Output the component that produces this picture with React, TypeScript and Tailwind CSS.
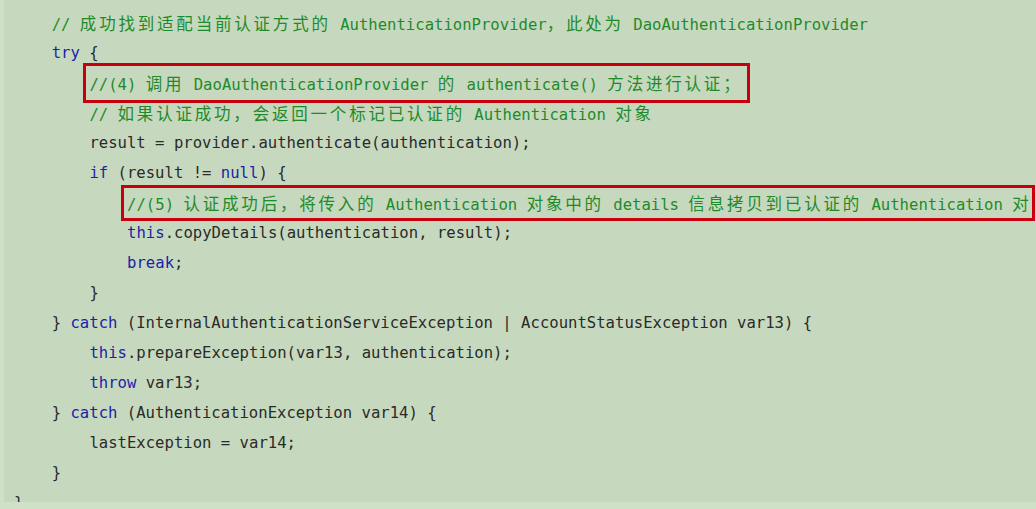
import React from "react";

type Seg = { t: string; c?: "kw" | "cm" };

const CJK = /[\u3000-\u303f\u4e00-\u9fff\uff00-\uffef]+/g;

function renderText(s: string, keyBase: string) {
  const out: React.ReactNode[] = [];
  let last = 0;
  let m: RegExpExecArray | null;
  let i = 0;
  CJK.lastIndex = 0;
  while ((m = CJK.exec(s))) {
    if (m.index > last) out.push(<span key={keyBase + "a" + i++}>{s.slice(last, m.index)}</span>);
    out.push(
      <span
        key={keyBase + "c" + i++}
        className="font-['Noto_Sans_CJK_SC',sans-serif] text-[16.5px] tracking-[2.8px]"
      >
        {m[0]}
      </span>
    );
    last = m.index + m[0].length;
  }
  if (last < s.length) out.push(<span key={keyBase + "e" + i++}>{s.slice(last)}</span>);
  return out;
}

function Line({ indent, segs, box }: { indent: number; segs: Seg[]; box?: "a" | "b" }) {
  const pad = ["pl-0", "pl-[37.7px]", "pl-[75.4px]", "pl-[113.1px]"][indent];
  const content = segs.map((s, i) => (
    <span
      key={i}
      className={s.c === "kw" ? "text-[#1b22a8]" : s.c === "cm" ? "text-[#1f8a2a]" : "text-[#2a2a2a]"}
    >
      {renderText(s.t, "s" + i)}
    </span>
  ));
  return (
    <div className={`h-[30px] leading-[30px] whitespace-nowrap ${pad}`}>
      {box ? (
        <span className="relative inline-block">
          {content}
          <span
            className={
              box === "a"
                ? "absolute -left-[6px] -right-[8px] -top-[5px] -bottom-[3px] border-[3px] border-[#c8000e]"
                : "absolute -left-[6px] -right-[3px] -top-[3px] -bottom-[1px] border-[3px] border-[#c8000e]"
            }
          />
        </span>
      ) : (
        content
      )}
    </div>
  );
}

export default function App() {
  const lines: { indent: number; segs: Seg[]; box?: "a" | "b" }[] = [
    { indent: 1, segs: [{ t: "// 成功找到适配当前认证方式的 AuthenticationProvider，此处为 DaoAuthenticationProvider", c: "cm" }] },
    { indent: 1, segs: [{ t: "try", c: "kw" }, { t: " {" }] },
    { indent: 2, box: "a", segs: [{ t: "//(4) 调用 DaoAuthenticationProvider 的 authenticate() 方法进行认证；", c: "cm" }] },
    { indent: 2, segs: [{ t: "// 如果认证成功，会返回一个标记已认证的 Authentication 对象", c: "cm" }] },
    { indent: 2, segs: [{ t: "result = provider.authenticate(authentication);" }] },
    { indent: 2, segs: [{ t: "if", c: "kw" }, { t: " (result != " }, { t: "null", c: "kw" }, { t: ") {" }] },
    { indent: 3, box: "b", segs: [{ t: "//(5) 认证成功后，将传入的 Authentication 对象中的 details 信息拷贝到已认证的 Authentication 对", c: "cm" }] },
    { indent: 3, segs: [{ t: "this", c: "kw" }, { t: ".copyDetails(authentication, result);" }] },
    { indent: 3, segs: [{ t: "break", c: "kw" }, { t: ";" }] },
    { indent: 2, segs: [{ t: "}" }] },
    { indent: 1, segs: [{ t: "} " }, { t: "catch", c: "kw" }, { t: " (InternalAuthenticationServiceException | AccountStatusException var13) {" }] },
    { indent: 2, segs: [{ t: "this", c: "kw" }, { t: ".prepareException(var13, authentication);" }] },
    { indent: 2, segs: [{ t: "throw", c: "kw" }, { t: " var13;" }] },
    { indent: 1, segs: [{ t: "} " }, { t: "catch", c: "kw" }, { t: " (AuthenticationException var14) {" }] },
    { indent: 2, segs: [{ t: "lastException = var14;" }] },
    { indent: 1, segs: [{ t: "}" }] },
    { indent: 0, segs: [{ t: "}" }] },
  ];
  return (
    <div className="w-[1036px] h-[509px] bg-[#cfe1c7] flex flex-col overflow-hidden">
      <div className="ml-[4px] h-[502px] bg-[#c6d9be] overflow-hidden pt-[8px] pl-[10px] font-['DejaVu_Sans_Mono',monospace] text-[15.6px]">
        {lines.map((l, i) => (
          <Line key={i} indent={l.indent} segs={l.segs} box={l.box} />
        ))}
      </div>
    </div>
  );
}
